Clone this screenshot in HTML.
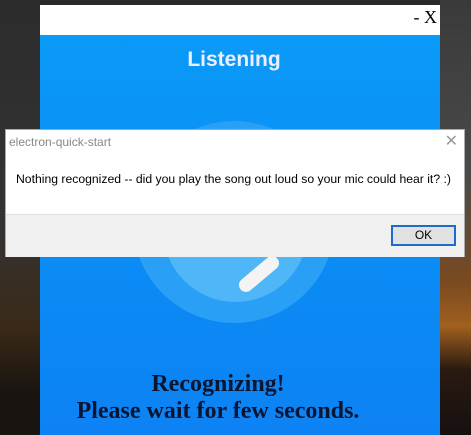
<!DOCTYPE html>
<html><head><style>
body{margin:0;width:471px;height:435px;overflow:hidden;position:relative;background:linear-gradient(180deg,#2a2a2a 0%,#333 60%,#3a2a1a 80%,#1a1410 100%);font-family:"Liberation Sans",sans-serif}
.bgr{position:absolute;left:440px;top:0;width:31px;height:435px;background:linear-gradient(180deg,#3a3a3a 0%,#4a4a4a 40%,#7a4a20 65%,#a0601f 75%,#2a1a10 85%,#151010 100%)}
.bgl{position:absolute;left:0;top:0;width:40px;height:435px;background:linear-gradient(180deg,#2c2c2c 0%,#333 50%,#3a2a18 75%,#1a1410 90%)}
.win{position:absolute;left:40px;top:5px;width:400px;height:430px;background:linear-gradient(180deg,#0a9cf7 0%,#0a90f5 40%,#0d82f4 100%);overflow:hidden}
.bar{position:absolute;left:0;top:0;width:400px;height:30px;background:#fff}
.bar span{position:absolute;right:3px;top:2px;font:18px "Liberation Serif",serif;color:#000}
.title{position:absolute;top:43px;left:-6px;width:400px;text-align:center;color:#eef;font-weight:bold;font-size:21px}
.c1{position:absolute;left:93px;top:116px;width:202px;height:202px;border-radius:50%;background:#2a9ff6}
.c2{position:absolute;left:123px;top:152px;width:145px;height:145px;border-radius:50%;background:#4fb6f8}
.stick{position:absolute;left:195px;top:262px;width:48px;height:14px;border-radius:7px;background:#f4f4f4;transform:rotate(-40deg)}
.t2{position:absolute;top:366px;left:-22px;width:400px;text-align:center;font:bold 24px/27px "Liberation Serif",serif;color:#0a1530}
.dlg{position:absolute;left:6px;top:130px;width:458px;height:126px;background:#fff;box-shadow:0 0 0 1px #aaa}
.dt{position:absolute;left:3px;top:5px;font-size:12px;color:#888}
.dx{position:absolute;right:6px;top:1px;font-size:16px;color:#999;font-weight:100}
.msg{position:absolute;left:10px;top:42px;font-size:12.2px;color:#000}
.foot{position:absolute;left:0;top:84px;width:458px;height:42px;background:#f0f0f0;border-top:1px solid #dfdfdf}
.ok{position:absolute;left:385px;top:10px;width:61px;height:17px;border:2px solid #1a6dc8;background:#e1e1e1;text-align:center;font-size:12px;line-height:17px}
</style></head><body>
<div class="bgl"></div><div class="bgr"></div>
<div class="win"><div class="bar"><span>- X</span></div>
<div class="title">Listening</div>
<div class="c1"></div><div class="c2"></div><div class="stick"></div>
<div class="t2">Recognizing!<br>Please wait for few seconds.</div></div>
<div class="dlg"><div class="dt">electron-quick-start</div><div class="dx">✕</div>
<div class="msg">Nothing recognized -- did you play the song out loud so your mic could hear it? :)</div>
<div class="foot"><div class="ok">OK</div></div></div>
</body></html>
